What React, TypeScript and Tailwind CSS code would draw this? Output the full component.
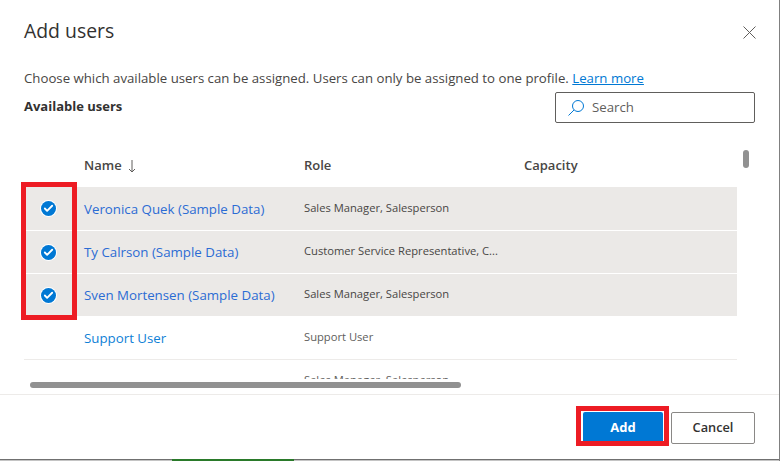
import { Check } from "lucide-react";

const users = [
  { name: "Veronica Quek (Sample Data)", role: "Sales Manager, Salesperson", selected: true },
  { name: "Ty Calrson (Sample Data)", role: "Customer Service Representative, C...", selected: true },
  { name: "Sven Mortensen (Sample Data)", role: "Sales Manager, Salesperson", selected: true },
  { name: "Support User", role: "Support User", selected: false },
  { name: "", role: "Sales Manager, Salesperson", selected: false },
];

function SelectedMark() {
  return (
    <span className="flex h-[17px] w-[17px] items-center justify-center rounded-full bg-white">
      <span className="flex h-[15px] w-[15px] items-center justify-center rounded-full bg-[#0078d4]">
        <Check size={11} strokeWidth={4} className="text-white" />
      </span>
    </span>
  );
}

function SearchIcon() {
  return (
    <svg width="16" height="16" viewBox="0 0 16 16" fill="none" stroke="#0078d4" strokeWidth="1">
      <circle cx="10" cy="6" r="5.5" />
      <path d="M6 10 L0.5 15.5" />
    </svg>
  );
}

function SortArrow() {
  return (
    <svg width="8" height="14" viewBox="0 0 8 14" fill="none" stroke="#605e5c" strokeWidth="1">
      <path d="M4 1 V13 M1 10 L4 13 L7 10" />
    </svg>
  );
}

export default function App() {
  return (
    <div className="relative h-[461px] w-[780px] overflow-hidden border-r border-[#808080] bg-white font-['Open_Sans','Noto_Sans',sans-serif] text-[#323130]">
      <div className="flex h-[459px] flex-col">
        <header className="flex h-[68px] shrink-0 items-start justify-between pl-6 pr-[23px] pt-[17px]">
          <h1 className="text-[19.4px] leading-7 font-normal">Add users</h1>
          <svg width="13" height="13" viewBox="0 0 13 13" className="mt-[9px]" stroke="#605e5c" strokeWidth="1">
            <path d="M0.5 0.5 L12.5 12.5 M12.5 0.5 L0.5 12.5" />
          </svg>
        </header>

        <p className="pl-6 text-[13.23px] leading-5 text-[#484644]">
          Choose which available users can be assigned. Users can only be assigned to one profile.{" "}
          <a className="text-[#0078d4] underline">Learn more</a>
        </p>

        <div className="flex h-[32px] shrink-0 items-start justify-between pr-6 pl-6 pt-[4px]">
          <span className="mt-1 text-[13px] leading-5 font-bold">Available users</span>
          <div className="flex h-[31px] w-[200px] items-center gap-2 rounded-[2px] border border-[#605e5c] pl-3">
            <SearchIcon />
            <span className="pt-[1px] text-[13.25px] text-[#605e5c]">Search</span>
          </div>
        </div>

        <div className="relative h-[274px] shrink-0">
          <div className="h-[259px] overflow-hidden pt-[23px] pl-6">
            <div className="w-[713px]">
              <div className="flex h-[44px] items-center pt-[2px] text-[13px] font-semibold text-[#484644]">
                <div className="w-[60px]" />
                <div className="flex w-[220px] items-center gap-[6px]">
                  Name <SortArrow />
                </div>
                <div className="w-[220px]">Role</div>
                <div>Capacity</div>
              </div>
              {users.map((u, i) => (
                <div
                  key={u.name + u.role}
                  className={`flex items-center border-b ${i === 0 ? "h-[44px]" : "h-[43px]"} ${
                    u.selected ? "border-white bg-[#ebe9e7]" : "border-[#edebe9]"
                  }`}
                >
                  <div className="w-[60px] pl-4">{u.selected && <SelectedMark />}</div>
                  <a className={`w-[220px] pt-[2px] text-[13.3px] ${u.selected ? "text-[#2b6cd4]" : "text-[#0f7fd6]"}`}>{u.name}</a>
                  <div className={`w-[200px] truncate pb-[1px] text-[11.2px] ${u.selected ? "text-[#484644]" : "text-[#605e5c]"}`}>
                    {u.role}
                  </div>
                </div>
              ))}
            </div>
          </div>

          <div className="absolute top-[30px] left-[743px] h-[18px] w-[6px] rounded-full bg-[#919191]" />
          <div className="absolute top-[262px] left-[30px] h-[6px] w-[431px] rounded-full bg-[#919191]" />
        </div>

        <footer className="flex flex-1 items-start justify-end gap-[8px] border-t border-[#edebe9] pt-[17px] pr-6">
          <button className="h-8 w-[80px] rounded-[2px] bg-[#0078d4] text-[13px] font-bold text-white">Add</button>
          <button className="h-8 w-[84px] rounded-[2px] border border-[#8a8886] text-[12.75px] font-semibold">Cancel</button>
        </footer>
      </div>

      <div className="h-[2px] border-t border-[#707070] bg-[#c4c4c4]" />
      <div className="absolute bottom-0 left-[172px] h-[2px] w-[122px] bg-[#2a7a2a]" />

      {/* red annotation boxes drawn over the screenshot */}
      <div className="absolute top-[182px] left-[21px] h-[138px] w-[56px] border-[5px] border-[#ed1c24]" />
      <div className="absolute top-[406px] left-[576px] h-[40px] w-[93px] border-[5px] border-[#ed1c24]" />
    </div>
  );
}
